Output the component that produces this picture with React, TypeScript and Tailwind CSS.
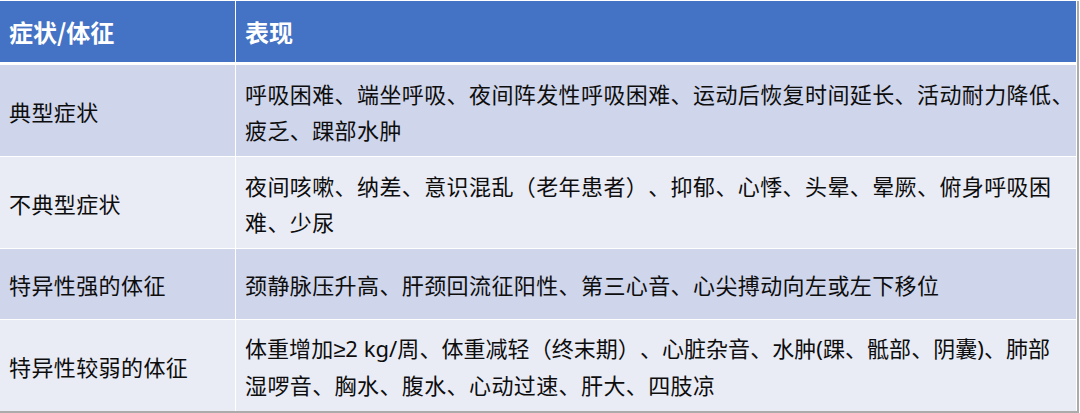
import React from "react";

const latin = { fontFamily: '"Noto Sans", "Liberation Sans", sans-serif' };

const rows: { label: string; lines: React.ReactNode[]; h: string; bg: string }[] = [
  {
    label: "典型症状",
    lines: [
      "呼吸困难、端坐呼吸、夜间阵发性呼吸困难、运动后恢复时间延长、活动耐力降低、",
      "疲乏、踝部水肿",
    ],
    h: "h-[91px]",
    bg: "bg-[#CFD5EA]",
  },
  {
    label: "不典型症状",
    lines: [
      "夜间咳嗽、纳差、意识混乱（老年患者）、抑郁、心悸、头晕、晕厥、俯身呼吸困",
      "难、少尿",
    ],
    h: "h-[91px]",
    bg: "bg-[#E9EBF5]",
  },
  {
    label: "特异性强的体征",
    lines: ["颈静脉压升高、肝颈回流征阳性、第三心音、心尖搏动向左或左下移位"],
    h: "h-[70px]",
    bg: "bg-[#CFD5EA]",
  },
  {
    label: "特异性较弱的体征",
    lines: [
      <span className="tracking-[0.05px]">
        体重增加<span style={latin}>≥2 kg/</span>周、体重减轻（终末期）、心脏杂音、水肿<span style={latin}>(</span>踝、骶部、阴囊<span style={latin}>)</span>、肺部
      </span>,
      "湿啰音、胸水、腹水、心动过速、肝大、四肢凉",
    ],
    h: "h-[91px]",
    bg: "bg-[#E9EBF5]",
  },
];

export default function App() {
  return (
    <div
      className="w-[1080px] h-[413px] bg-white pt-px [text-spacing-trim:space-all]"
      style={{ fontFamily: '"Noto Sans CJK SC", "Noto Sans", sans-serif' }}
    >
      <div className="w-[1079px] bg-white border-r-2 border-b-2 border-[#ababab] flex flex-col">
        <div className="flex h-[61px] bg-[#4472C4] text-white font-bold text-[24px] mr-px">
          <div className="w-[236px] flex items-center pl-[9px] border-r border-white">症状/体征</div>
          <div className="flex-1 flex items-center pl-[9px]">表现</div>
        </div>
        <div className="h-[3px]" />
        <div className="flex flex-col gap-px mr-px">
          {rows.map((r) => (
            <div
              key={r.label}
              className={`flex ${r.h} ${r.bg} text-[#0d0d0d] text-[22px] tracking-[0.4px] leading-[36px]`}
            >
              <div className="w-[236px] flex items-center pl-[9px] border-r border-white">{r.label}</div>
              <div className="flex-1 flex flex-col justify-center pl-[9px] whitespace-nowrap">
                {r.lines.map((l, i) => (
                  <div key={i}>{l}</div>
                ))}
              </div>
            </div>
          ))}
        </div>
      </div>
    </div>
  );
}
